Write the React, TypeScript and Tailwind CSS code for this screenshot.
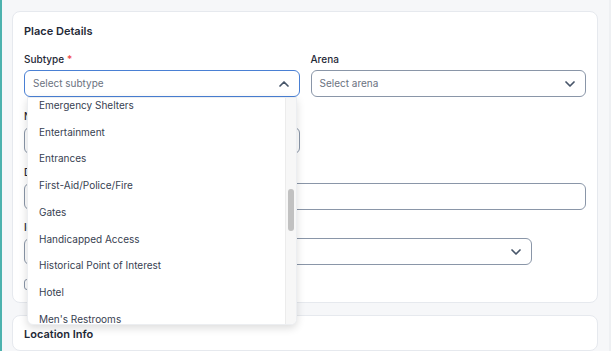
import { ChevronDown, ChevronUp } from "lucide-react";

const items = [
  "Emergency Shelters",
  "Entertainment",
  "Entrances",
  "First-Aid/Police/Fire",
  "Gates",
  "Handicapped Access",
  "Historical Point of Interest",
  "Hotel",
  "Men's Restrooms",
];

const Label = ({ text, required }: { text: string; required?: boolean }) => (
  <label className="block h-[14px] leading-[14px] mb-[4px] text-[10px] font-medium text-[#1f2937]">
    {text}
    {required && <span className="text-[#ef4444] ml-[3px]">*</span>}
  </label>
);

export default function App() {
  return (
    <div className="w-[611px] h-[351px] overflow-hidden bg-[#f6f7f9] border-l-2 border-[#4db2ae] flex font-['Inter',sans-serif]">
      <div className="w-[586px] ml-[10px] mt-[11px] flex flex-col gap-[12px]">
        <section className="relative bg-white border border-[#e6e9ee] rounded-lg px-[11px] pt-[11px] pb-[10px]">
          <h2 className="text-[11px] font-semibold text-[#1f2937] leading-[16px] mb-[13px]">Place Details</h2>

          <div className="grid grid-cols-2 gap-x-[11px]">
            <div className="relative">
              <Label text="Subtype" required />
              <div className="h-[27px] border border-[#4a80d4] rounded-md flex items-center justify-between pl-[8px] pr-[7px]">
                <span className="text-[10px] text-[#6b7280]">Select subtype</span>
                <ChevronUp size={16} strokeWidth={2.6} className="text-[#475569]" />
              </div>

              <div className="absolute left-[3px] right-[3px] top-[45px] h-[228px] bg-white rounded-b-md shadow-[0_3px_8px_rgba(0,0,0,0.14)] border border-[#eceef1] flex z-10 overflow-hidden">
                <ul className="flex-1 mt-[-6px]">
                  {items.map((it) => (
                    <li key={it} className="h-[26.75px] flex items-center pl-[11px] text-[10px] text-[#374151]">
                      {it}
                    </li>
                  ))}
                </ul>
                <div className="w-[11px] bg-[#f7f7f7] border-l border-[#ececec] pt-[91px]">
                  <div className="mx-auto w-[6px] h-[42px] rounded-full bg-[#c1c1c1]" />
                </div>
              </div>
            </div>
            <div>
              <Label text="Arena" />
              <div className="h-[27px] border border-[#8a96a8] rounded-md flex items-center justify-between pl-[8px] pr-[7px]">
                <span className="text-[10px] text-[#6b7280]">Select arena</span>
                <ChevronDown size={16} strokeWidth={2.6} className="text-[#475569]" />
              </div>
            </div>
          </div>

          <div className="mt-[12px] w-[276px]">
            <Label text="Name" />
            <div className="h-[27px] border border-[#8a96a8] rounded-md" />
          </div>

          <div className="mt-[11px]">
            <Label text="Description" />
            <div className="h-[27px] border border-[#8a96a8] rounded-md" />
          </div>

          <div className="mt-[10px] w-[508px]">
            <Label text="Icon" />
            <div className="h-[27px] border border-[#8a96a8] rounded-md flex items-center justify-end pr-[7px]">
              <ChevronDown size={16} strokeWidth={2.6} className="text-[#475569]" />
            </div>
          </div>

          <div className="mt-[12px] flex items-center gap-[6px]">
            <div className="w-[11px] h-[11px] border border-[#8a96a8] rounded-[3px]" />
            <span className="text-[10px] text-[#374151]">Active</span>
          </div>
        </section>

        <section className="bg-white border border-[#e6e9ee] rounded-lg px-[11px] pt-[10px] h-[60px]">
          <h2 className="text-[11px] font-semibold text-[#1f2937] leading-[16px]">Location Info</h2>
        </section>
      </div>
      <div className="ml-auto w-[2px] bg-[#eef0f3]" />
    </div>
  );
}
